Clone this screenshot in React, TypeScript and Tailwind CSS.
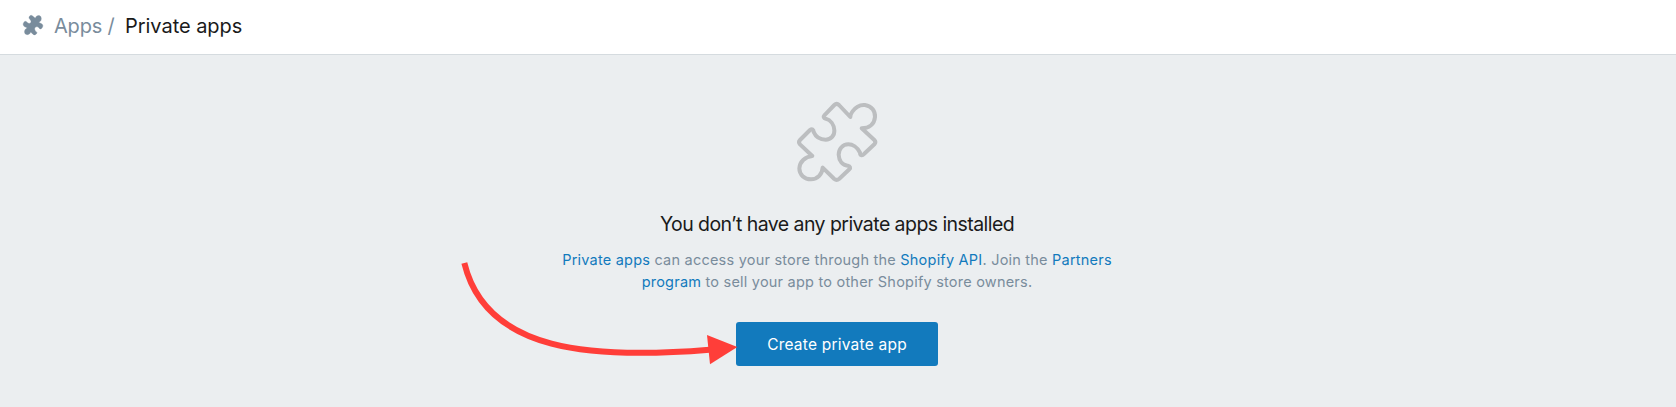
const PUZZLE =
  "M163 45 Q170 38 177 45 L211 81 Q211 73 217 65 C229 48 245 44 255 45 C276 48 286 64 285 81 C283 104 266 115 245 115 L283 150 Q289 156 283 163 L252 192 C246 199 240 196 240 188 C232 171 217 163 205 163 C187 163 176 178 176 194 C177 214 188 226 203 227 C211 229 212 233 208 238 L178 266 Q170 273 163 267 L128 233 C127 252 113 268 93 268 C73 268 58 254 58 235 C59 216 75 200 97 198 L60 163 Q54 156 60 150 L90 120 C96 115 101 118 101 126 C107 140 121 149 137 149 C153 149 164 136 163 121 C162 104 152 90 137 86 C131 85 129 80 133 76 Z";

const PUZZLE_SOLID =
  "M29 12 Q33 7 38 12 L46 19 C48 9 60 8 63 15 C66 23 62 29 56 31 L66 36 Q70 39 68 45 L64 50 Q60 53 57 48 C54 43 45 43 44 50 C43 56 50 59 51 62 Q51 65 46 68 Q42 70 38 66 L32 60 C29 70 17 70 14 63 C12 56 16 50 22 48 L12 43 Q8 39 10 34 L13 29 Q18 26 21 31 C25 36 33 35 33 29 C33 22 26 21 27 16 Z";

export default function App() {
  return (
    <div className="flex h-[407px] w-full flex-col overflow-hidden bg-[#ebeef0] font-['Inter',sans-serif]">
      <header className="flex h-[55px] shrink-0 items-center border-b border-[#d5dbdf] bg-white pl-5 pb-[2px] text-xl">
        <svg className="mt-[-2px] h-[26px] w-[26px] shrink-0" viewBox="0 0 78 78">
          <path d={PUZZLE_SOLID} fill="#798c9c" stroke="#798c9c" strokeWidth="1" />
        </svg>
        <nav className="flex whitespace-nowrap">
          <a className="ml-2 w-[71px] tracking-[-0.2px] text-[#798c9c]">Apps /</a>
          <span className="tracking-[-0.04px] text-[#1a1a1a]">Private apps</span>
        </nav>
      </header>
      <main className="relative flex flex-col items-center pr-[2px] pt-[35px]">
        <svg className="h-[105px] w-[120px]" viewBox="-9 0 360 315" fill="none">
          <path d={PUZZLE} stroke="#bcbec0" strokeWidth="12" strokeLinejoin="round" />
        </svg>
        <h1 className="mt-[15px] whitespace-nowrap text-[19.5px] leading-7 tracking-[-0.56px] text-[#1a1a1a]">
          You don’t have any private apps installed
        </h1>
        <p className="mt-[11px] whitespace-nowrap text-center text-[14.5px] leading-[22px] tracking-[0.22px] text-[#798c9c]">
          <a className="text-[#127abd]">Private apps</a> can access your store through the{" "}
          <a className="text-[#127abd]">Shopify API</a>. Join the <a className="text-[#127abd]">Partners</a>
          <br />
          <a className="text-[#127abd]">program</a> to sell your app to other Shopify store owners.
        </p>
        <button className="mt-[29px] h-11 w-[202px] rounded-[3px] bg-[#127abd] pt-[2px] text-[15.5px] tracking-[0.22px] text-white">
          Create private app
        </button>
        <svg className="absolute left-[450px] top-[195px] h-[130px] w-[290px]" viewBox="0 0 870 390" fill="none">
          <path d="M43 39 C108 308 430 328 778 299" stroke="#ff3e39" strokeWidth="18" />
          <path d="M771 255 L862 291 L780 343 Z" fill="#ff3e39" />
        </svg>
      </main>
    </div>
  );
}
